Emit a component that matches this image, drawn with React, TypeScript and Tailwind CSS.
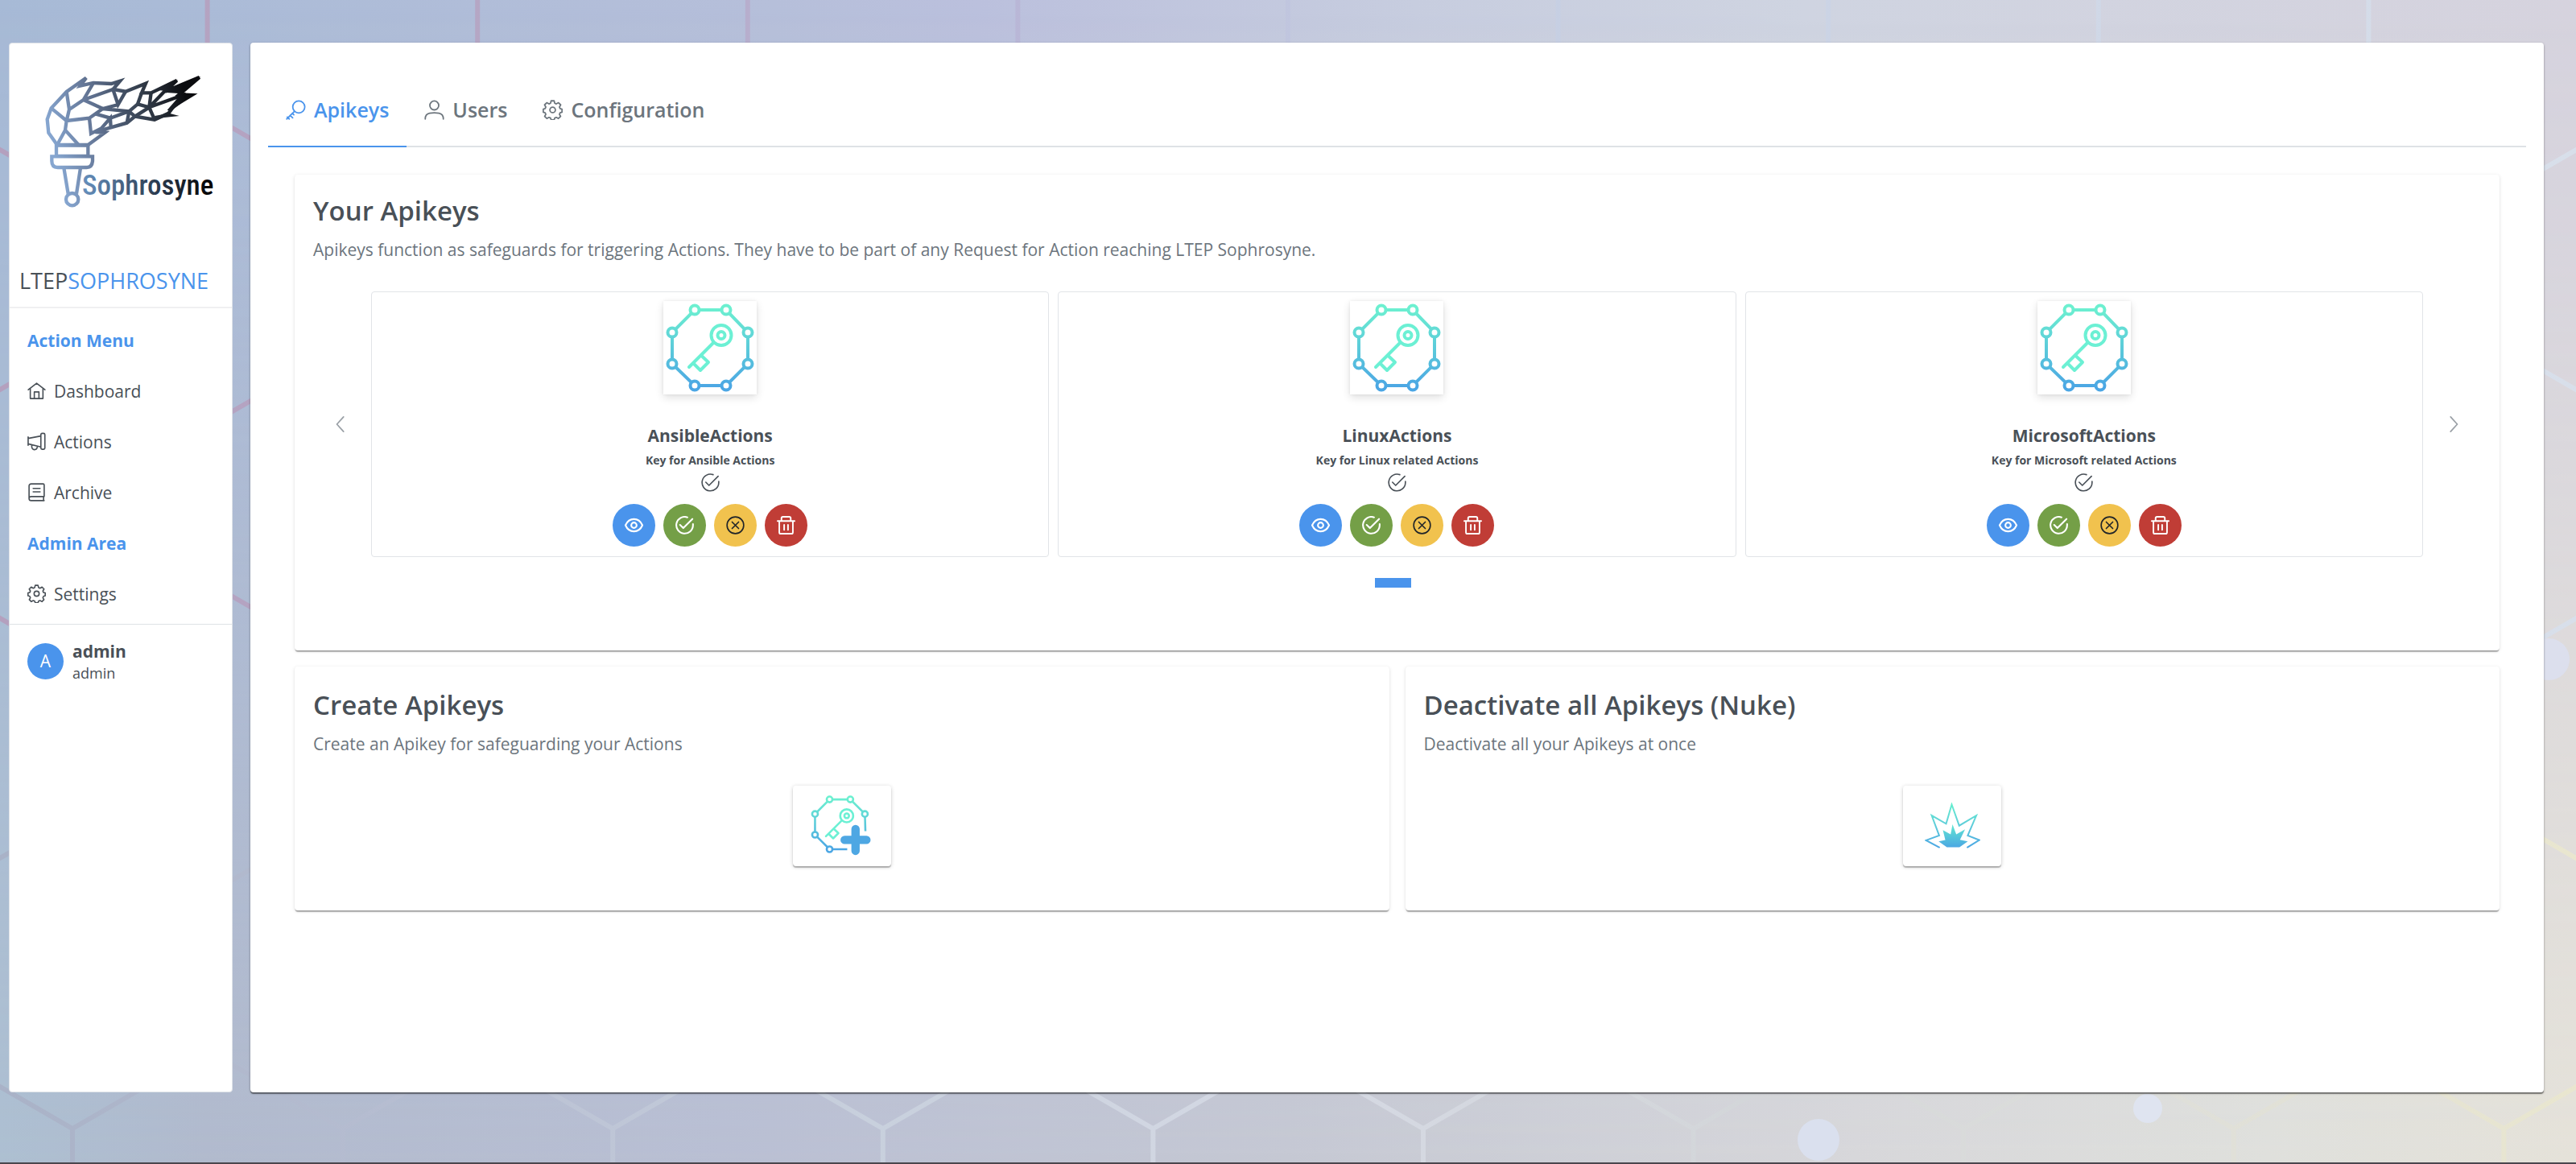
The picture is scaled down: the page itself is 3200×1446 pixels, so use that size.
import type { ReactNode } from "react";

/* ---------- icons ---------- */

function Icon({ children, className = "size-[23px]", width = 1.7 }: { children: ReactNode; className?: string; width?: number }) {
  return (
    <svg viewBox="0 0 24 24" className={className} fill="none" stroke="currentColor" strokeWidth={width} strokeLinecap="round" strokeLinejoin="round" aria-hidden="true">
      {children}
    </svg>
  );
}

const HomeIcon = () => (
  <Icon>
    <path d="M1.2 10.6 12 2.2l10.800 8.400M3.800 9v13h16.400V9M9 22v-8.500h6V22" />
  </Icon>
);
const MegaphoneIcon = () => (
  <Icon>
    <path d="M1 6v11M1 8l16.500-3.200M1 15l16.500 4M17.500 3.200c0-1.200.6-1.700 1.600-1.700h2c1 0 1.600.6 1.600 1.600v17.300c0 1-.6 1.600-1.600 1.600h-2c-1 0-1.600-.6-1.600-1.600zM5.700 17.500c-.3 3 1.300 4.900 3.400 5.100 2 .1 3.400-1.300 3.700-3.300" />
  </Icon>
);
const BookIcon = () => (
  <Icon>
    <path d="M21.800 17.600V2.600c0-.9-.5-1.400-1.400-1.400H5c-1.700 0-2.800 1.100-2.800 2.800v16c0 1.700 1.100 2.800 2.800 2.800h16.800M21 17.600v5.200M21.800 17.600H5c-1.600 0-2.800.8-2.800 2.400M7.500 7h9M7.500 11.500h9" />
  </Icon>
);
const CogIcon = ({ className }: { className?: string }) => (
  <Icon className={className}>
    <circle cx="12" cy="12" r="3.300" />
    <path d="M10.200 1.200h3.600l.7 2.900 1.900.8 2.600-1.500 2.600 2.600-1.500 2.600.8 1.900 2.300.6v3.600l-2.300.7-.8 1.900 1.400 2.400-2.600 2.600-2.500-1.400-1.900.8-.7 2.100h-3.600l-.7-2.100-1.900-.8-2.500 1.400-2.600-2.600 1.400-2.400-.8-1.900-2.300-.7v-3.600l2.300-.6.8-1.900L2.400 6 5 3.400l2.600 1.500 1.900-.8z" />
  </Icon>
);
const KeyIcon = ({ className }: { className?: string }) => (
  <Icon className={className}>
    <circle cx="15.500" cy="8.500" r="7.200" />
    <path d="M10.300 13.700 1.200 22.800M1.800 20.500l2.300 2.300M5.200 18.500l3 3M7.800 16l1.800 1.800" />
  </Icon>
);
const UserIcon = ({ className }: { className?: string }) => (
  <Icon className={className}>
    <circle cx="12" cy="6.700" r="5.300" />
    <path d="M1.200 22.800c0-4.500 2.300-6.300 5.300-6.800 3.600-.6 7.400-.6 11 0 3 .5 5.300 2.300 5.300 6.800" />
  </Icon>
);
const CheckCircleIcon = ({ className, width }: { className?: string; width?: number }) => (
  <Icon className={className} width={width}>
    <path d="M15.500 1.700A10.800 10.800 0 1 0 22.800 12v-1.500M6 11.500l4.200 4.200L22 3.800" />
  </Icon>
);
const EyeIcon = () => (
  <Icon width={2.2}>
    <path d="M1 12c2-4.500 6-8 11-8s9 3.500 11 8c-2 4.500-6 8-11 8s-9-3.500-11-8z" />
    <circle cx="12" cy="12" r="3.500" />
  </Icon>
);
const TimesCircleIcon = () => (
  <Icon width={1.700}>
    <circle cx="12" cy="12" r="10.800" />
    <path d="m7.800 7.800 8.400 8.400M16.200 7.800l-8.400 8.400" />
  </Icon>
);
const TrashIcon = () => (
  <Icon width={2}>
    <path d="M1 6.500h22M6 6V3c0-1.200.7-2 2-2h8c1.300 0 2 .8 2 2v3M3.200 6.500V21c0 1.300.8 2 2 2h13.600c1.200 0 2-.7 2-2V6.500M9.500 11.500v6.500M14.500 11.500v6.500" />
  </Icon>
);

/* ---------- drawings ---------- */

function TorchLogo() {
  return (
    <svg viewBox="150 270 660 510" className="h-[170px] w-[220px]" role="img" aria-label="Sophrosyne torch">
      <defs>
        <linearGradient id="torch" gradientUnits="userSpaceOnUse" x1="170" y1="450" x2="680" y2="330">
          <stop offset="0" stopColor="#86a6d0" />
          <stop offset=".3" stopColor="#66799a" />
          <stop offset=".7" stopColor="#333d4b" />
          <stop offset="1" stopColor="#0b0c0f" />
        </linearGradient>
        <linearGradient id="torchText" gradientUnits="userSpaceOnUse" x1="305" y1="0" x2="780" y2="0">
          <stop offset="0" stopColor="#6690bd" />
          <stop offset=".6" stopColor="#2a394c" />
          <stop offset="1" stopColor="#050505" />
        </linearGradient>
      </defs>
      <g fill="none" stroke="url(#torch)" strokeWidth="13">
        <path d="M210 540 178 495 173 445 188 403 245 342 318 290 296 320 345 309 412 312 444 302 418 333 465 341 540 311 525 346 560 346 656 300 612 341 740 288 665 352 712 354 645 395 625 422 573 446 500 434 470 458 410 475 352 492 388 494 325 540z" />
        <path d="M245 342 255 408 245 450 188 403M255 408 308 372 345 309M308 372 418 333 437 390 465 341M308 372 380 405 437 390M245 450 330 440 380 405 478 415 408 440 352 424M245 450 240 485 210 540M240 485 290 540M330 440 336 498 375 478 408 440 410 475M478 415 470 458M478 415 510 388 525 346M510 388 553 400 560 346M553 400 500 434M553 400 573 446M478 415 500 434M553 400 620 330M553 400 690 350" />
        <path d="M207 542H325V582H207zM190 583H342V600Q340 624 320 624H212Q190 624 190 600zM235 626 251 722M297 626 282 722" />
        <circle cx="266" cy="743" r="23" />
      </g>
      <path fill="url(#torch)" d="m600 345 145-60-72 64-58-4zM672 350l44 2-82 62-14-4 30-34zM573 432l55-10 37 10-90 10zM590 336l70-39-36 44z" />
      <text x="303" y="727" fontSize="105" fontWeight="500" fontFamily="'Liberation Sans Narrow', 'Roboto Condensed', Roboto, sans-serif" fill="url(#torchText)">Sophrosyne</text>
    </svg>
  );
}

function KeyRing({ plus = false, className }: { plus?: boolean; className: string }) {
  const nodes = plus
    ? [[38, 11], [78, 11], [106, 39], [10, 39], [10, 79], [38, 107]]
    : [[38, 11], [77, 11], [104, 39], [104, 78], [77, 105], [38, 105], [10, 78], [10, 39]];
  return (
    <svg viewBox={plus ? "0 0 124 124" : "-1 0 116 116"} className={className} fill="none" aria-hidden="true">
      <defs>
        <linearGradient id={plus ? "ringPlus" : "ring"} gradientUnits="userSpaceOnUse" x1="0" y1="8" x2="0" y2="108">
          <stop offset="0" stopColor="#6cf0d0" />
          <stop offset="1" stopColor="#4ba6e4" />
        </linearGradient>
      </defs>
      <g stroke={plus ? "url(#ringPlus)" : "url(#ring)"} strokeWidth="4">
        {plus ? (
          <path d="M72 107H38L10 79V39L38 11H78L106 39L107 72" />
        ) : (
          <path d="M38 11H77L104 39V78L77 105H38L10 78V39z" />
        )}
        {nodes.map(([x, y]) => (
          <circle key={x + "-" + y} cx={x} cy={y} r="5.500" fill="#fff" />
        ))}
      </g>
      <g stroke="#6cf0d4" strokeWidth="4" strokeLinecap="round" strokeLinejoin="round">
        <circle cx="71" cy="42.500" r="12.500" />
        <circle cx="71" cy="42.500" r="4.500" />
        <path d="M61 52 31 82M46 67.500 55 76 45 86 36.500 77.500" />
      </g>
      {plus && <path d="M88 68v42M67 89h42" stroke="#4ea7e3" strokeWidth="16" strokeLinecap="round" />}
    </svg>
  );
}

function Explosion() {
  return (
    <svg viewBox="332 168 208 172" className="h-[58px] w-[69px]" fill="none" aria-hidden="true">
      <defs>
        <linearGradient id="blastLine" gradientUnits="userSpaceOnUse" x1="0" y1="170" x2="0" y2="338">
          <stop offset="0" stopColor="#66efcf" />
          <stop offset=".45" stopColor="#5fcfd9" />
          <stop offset="1" stopColor="#4aa5e4" />
        </linearGradient>
        <linearGradient id="blastFill" gradientUnits="userSpaceOnUse" x1="0" y1="250" x2="0" y2="335">
          <stop offset="0" stopColor="#62e6d2" />
          <stop offset="1" stopColor="#4ba7e3" />
        </linearGradient>
      </defs>
      <path stroke="url(#blastLine)" strokeWidth="6" strokeLinecap="round" d="M386 334 337 308 386 290 358 215 412 246 433 174 461 253 525 215 493 290 536 307 492 334" />
      <path fill="url(#blastFill)" d="M415 334 384 312 409 307 400 270 429 286 436 248 450 286 483 267 464 306 493 312 462 334z" />
    </svg>
  );
}

/* Honeycomb wallpaper: rows of pointy-top cells, 336 wide */
function Wallpaper() {
  const rows = [-53, 238, 529, 820, 1111, 1402];
  const cell = (x: number, y: number) => `M${x} ${y + 194}V${y}M${x - 168} ${y - 97}L${x} ${y}L${x + 168} ${y - 97}`;
  return (
    <svg viewBox="0 0 3200 1446" preserveAspectRatio="none" className="absolute inset-0 -z-10 h-full w-full" fill="none" aria-hidden="true">
      <defs>
        <linearGradient id="sky">
          <stop offset="0" stopColor="#a7bad6" />
          <stop offset=".3" stopColor="#b6bfda" />
          <stop offset=".38" stopColor="#bbc0dd" />
          <stop offset=".55" stopColor="#c7cddf" />
          <stop offset=".7" stopColor="#cfd4e1" />
          <stop offset="1" stopColor="#d6d3de" />
        </linearGradient>
        <linearGradient id="ground">
          <stop offset="0" stopColor="#adbfd1" />
          <stop offset=".08" stopColor="#b1bacd" />
          <stop offset=".28" stopColor="#b9bfd3" />
          <stop offset=".5" stopColor="#c5c8d3" />
          <stop offset=".72" stopColor="#d7d7da" />
          <stop offset=".88" stopColor="#dfe0dc" />
          <stop offset="1" stopColor="#e5e2d9" />
        </linearGradient>
        <linearGradient id="fade" x2="0" y2="1">
          <stop offset="0" stopColor="#000" />
          <stop offset=".2" stopColor="#222" />
          <stop offset="1" stopColor="#fff" />
        </linearGradient>
        <mask id="groundMask">
          <rect width="3200" height="1446" fill="url(#fade)" />
        </mask>
        <linearGradient id="lineTop" gradientUnits="userSpaceOnUse" x1="0" y1="0" x2="3200" y2="0">
          <stop offset="0" stopColor="#b4a0be" />
          <stop offset=".2" stopColor="#b5a7c5" />
          <stop offset=".4" stopColor="#b9b7d7" />
          <stop offset=".55" stopColor="#c4cde2" />
          <stop offset="1" stopColor="#d8dfea" />
        </linearGradient>
        <linearGradient id="lineBottom" gradientUnits="userSpaceOnUse" x1="0" y1="0" x2="3200" y2="0">
          <stop offset="0" stopColor="#a9b2c7" />
          <stop offset=".14" stopColor="#b5bcd0" />
          <stop offset=".34" stopColor="#c8d0dd" />
          <stop offset=".5" stopColor="#d5d9e4" />
          <stop offset=".68" stopColor="#d3d6d9" />
          <stop offset=".82" stopColor="#dddedb" />
          <stop offset="1" stopColor="#e9e6cf" />
        </linearGradient>
      </defs>
      <rect width="3200" height="1446" fill="url(#sky)" />
      <rect width="3200" height="1446" fill="url(#ground)" mask="url(#groundMask)" />
      {rows.map((y, r) => (
        <path
          key={y}
          stroke={r < 4 ? "url(#lineTop)" : "url(#lineBottom)"}
          strokeWidth="6"
          d={Array.from({ length: 11 }, (_, i) => cell((r % 2 ? 90 : -78) + i * 335.600, y)).join("")}
        />
      ))}
      <circle cx="3166" cy="819" r="26" fill="#dcdfed" />
      <circle cx="2259" cy="1416" r="26" fill="#dae0ee" />
      <circle cx="2668" cy="1377" r="18" fill="#dfe4f0" />
      <rect y="1444" width="3200" height="2" fill="#4a464d" />
    </svg>
  );
}

/* ---------- page parts ---------- */

const menu = [
  { label: "Dashboard", icon: <HomeIcon /> },
  { label: "Actions", icon: <MegaphoneIcon /> },
  { label: "Archive", icon: <BookIcon /> },
];

function MenuLink({ label, icon }: { label: string; icon: ReactNode }) {
  return (
    <a href="#" className="flex h-[63px] items-center gap-[10px] px-[22px]">
      {icon}
      {label}
    </a>
  );
}

function Sidebar() {
  return (
    <aside className="flex w-[278px] shrink-0 flex-col rounded-[4px] border border-[#dfe3e8] bg-white text-[21px] leading-[30px] text-[#495057]">
      <div className="flex h-[275px] items-start pt-[36px] pl-[39px]">
        <TorchLogo />
      </div>
      <div className="flex h-[54px] items-start border-b-2 border-[#f0f0f1] px-[12px] text-[27px] leading-[40px]">
        <span>LTEP</span>
        <span className="text-[#4a94ec]">SOPHROSYNE</span>
      </div>
      <nav className="pt-[8px] pb-[6px]">
        <h2 className="flex h-[63px] items-center px-[22px] font-bold text-[#4a94ec]">Action Menu</h2>
        {menu.map((m) => (
          <MenuLink key={m.label} {...m} />
        ))}
        <h2 className="flex h-[63px] items-center px-[22px] font-bold text-[#4a94ec]">Admin Area</h2>
        <MenuLink label="Settings" icon={<CogIcon />} />
      </nav>
      <button type="button" className="flex items-center gap-[11px] border-t border-[#dee2e6] px-[22px] pt-[18px] text-left">
        <span className="flex size-[45px] items-center justify-center rounded-full bg-[#4a94ec] text-white">A</span>
        <span className="flex flex-col">
          <span className="text-[21px] leading-[30px] font-bold">admin</span>
          <span className="text-[18px] leading-[24px]">admin</span>
        </span>
      </button>
    </aside>
  );
}

const tabs = [
  { label: "Apikeys", icon: <KeyIcon className="size-[25px]" />, active: true },
  { label: "Users", icon: <UserIcon className="size-[25px]" />, active: false },
  { label: "Configuration", icon: <CogIcon className="size-[25px]" />, active: false },
];

function Tabs() {
  return (
    <div role="tablist" className="flex border-b-2 border-[#dee2e6]">
      {tabs.map((t) => (
        <button
          key={t.label}
          type="button"
          role="tab"
          aria-selected={t.active}
          className={
            t.active
              ? "-mb-[2px] flex h-[88px] items-center gap-[10px] border-b-2 border-[#4a94ec] px-[22px] pb-[3px] text-[25px] font-semibold text-[#4a94ec]"
              : "-mb-[2px] flex h-[88px] items-center gap-[10px] border-b-2 border-transparent px-[22px] pb-[3px] text-[25px] font-semibold text-[#6c757d]"
          }
        >
          {t.icon}
          {t.label}
        </button>
      ))}
    </div>
  );
}

function Card({ title, text, className, children }: { title: string; text: string; className: string; children: ReactNode }) {
  return (
    <section className={"rounded-[4px] bg-white px-[23px] shadow-[0_3px_1px_-1px_rgba(0,0,0,0.24),0_1px_1px_0_rgba(0,0,0,0.14),0_1px_4px_0_rgba(0,0,0,0.12)] " + className}>
      <h1 className="text-[33px] leading-[48px] font-semibold text-[#495057]">{title}</h1>
      <p className="text-[21px] leading-[48px] text-[#6c757d]">{text}</p>
      {children}
    </section>
  );
}

const keys = [
  { name: "AnsibleActions", text: "Key for Ansible Actions" },
  { name: "LinuxActions", text: "Key for Linux related Actions" },
  { name: "MicrosoftActions", text: "Key for Microsoft related Actions" },
];

const actions = [
  { label: "Show", style: "flex size-[53px] items-center justify-center rounded-full bg-[#4a94ec] text-white", icon: <EyeIcon /> },
  { label: "Activate", style: "flex size-[53px] items-center justify-center rounded-full bg-[#749f47] text-white", icon: <CheckCircleIcon width={2.2} /> },
  { label: "Deactivate", style: "flex size-[53px] items-center justify-center rounded-full bg-[#f1c24e] text-[#212529]", icon: <TimesCircleIcon /> },
  { label: "Delete", style: "flex size-[53px] items-center justify-center rounded-full bg-[#c03d36] text-white", icon: <TrashIcon /> },
];

function KeyCard({ name, text }: { name: string; text: string }) {
  return (
    <article className="flex h-[330px] flex-1 flex-col items-center rounded-[4px] border border-[#e1e4e8] pt-[11px] text-[#495057]">
      <div className="bg-white shadow-[0_4px_10px_rgba(0,0,0,0.12),0_0_3px_rgba(0,0,0,0.08)]">
        <KeyRing className="size-[116px]" />
      </div>
      <h2 className="mt-[36px] text-[21px] leading-[30px] font-bold">{name}</h2>
      <p className="mt-[4px] text-[14px] leading-[24px] font-bold">{text}</p>
      <CheckCircleIcon className="mt-[4px] size-[23px]" />
      <div className="mt-[15px] flex gap-[10px]">
        {actions.map((a) => (
          <button key={a.label} type="button" aria-label={a.label} className={a.style}>
            {a.icon}
          </button>
        ))}
      </div>
    </article>
  );
}

const tile = "mx-auto mt-[28px] flex h-[100px] w-[122px] items-center justify-center rounded-[4px] bg-white shadow-[0_2px_1px_rgba(0,0,0,0.24),0_1px_5px_rgba(0,0,0,0.2)]";

export default function App() {
  return (
    <div className="relative isolate flex min-h-screen gap-[22px] pt-[53px] pr-[40px] pb-[89px] pl-[11px] font-['Open_Sans','Noto_Sans',sans-serif]">
      <Wallpaper />
      <Sidebar />
      <main className="flex min-w-0 flex-1 flex-col rounded-[4px] bg-white px-[22px] pt-[42px] shadow-[0_2px_1px_0_rgba(0,0,0,0.38),0_1px_3px_0_rgba(0,0,0,0.3)]">
        <Tabs />
        <div className="flex flex-col gap-[20px] px-[33px] pt-[34px]">
          <Card title="Your Apikeys" text="Apikeys function as safeguards for triggering Actions. They have to be part of any Request for Action reaching LTEP Sophrosyne." className="h-[591px] pt-[21px]">
            <div className="mt-[28px] flex items-center px-[15px]">
              <button type="button" aria-label="Previous" className="flex w-[57px] pl-[9px] text-[#9aa0a6]">
                <Icon className="size-[22px]" width={1.900}>
                  <path d="M15 2 6 12l9 10" />
                </Icon>
              </button>
              <div className="flex flex-1 gap-[11px]">
                {keys.map((k) => (
                  <KeyCard key={k.name} {...k} />
                ))}
              </div>
              <button type="button" aria-label="Next" className="flex w-[57px] justify-end pr-[9px] text-[#9aa0a6]">
                <Icon className="size-[22px]" width={1.900}>
                  <path d="m9 2 9 10-9 10" />
                </Icon>
              </button>
            </div>
            <div className="mt-[26px] flex justify-center pr-[11px]">
              <button type="button" aria-label="Page 1" className="h-[12px] w-[45px] bg-[#4a94ec]" />
            </div>
          </Card>
          <div className="grid grid-cols-2 gap-[20px]">
            <Card title="Create Apikeys" text="Create an Apikey for safeguarding your Actions" className="h-[303px] pt-[24px]">
              <button type="button" aria-label="Create Apikey" className={tile}>
                <KeyRing plus className="size-[80px]" />
              </button>
            </Card>
            <Card title="Deactivate all Apikeys (Nuke)" text="Deactivate all your Apikeys at once" className="h-[303px] pt-[24px]">
              <button type="button" aria-label="Deactivate all" className={tile}>
                <Explosion />
              </button>
            </Card>
          </div>
        </div>
      </main>
    </div>
  );
}
